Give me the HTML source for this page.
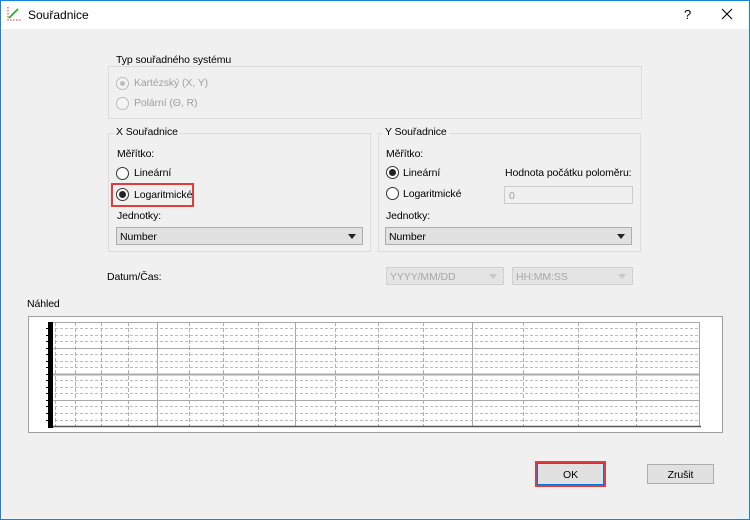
<!DOCTYPE html>
<html><head><meta charset="utf-8"><style>
*{box-sizing:border-box;margin:0;padding:0}
body{width:750px;height:520px;position:relative;background:#f0f0f0;font-family:"Liberation Sans",sans-serif;font-size:10.5px;letter-spacing:-0.1px;color:#000;overflow:hidden}
.a{position:absolute;white-space:nowrap}
.win{position:absolute;left:0;top:0;width:750px;height:520px;border:1px solid #1883d7}
.tb{position:absolute;left:0;top:0;width:750px;height:29px;background:#fff}
.grp{position:absolute;border:1px solid #dcdcdc}
.gl{position:absolute;background:#f0f0f0;padding:0 2px}
.rad{position:absolute;width:13px;height:13px;border:1px solid #333;border-radius:50%;background:#fff}
.rad.on::after{content:"";position:absolute;left:2px;top:2px;width:7px;height:7px;border-radius:50%;background:#222}
.rad.dis{border-color:#bcbcbc;background:#f4f4f4}
.rad.dis.on::after{background:#bcbcbc;left:3px;top:3px;width:5px;height:5px}
.dis{color:#a0a0a0}
.cb{position:absolute;height:18px;background:#e1e1e1;border:1px solid #adadad;padding:3px 0 0 3px}
.cb::after{content:"";position:absolute;right:6px;top:6px;border-left:4px solid transparent;border-right:4px solid transparent;border-top:5px solid #222}
.cb.d{background:#e4e4e4;border-color:#d0d0d0;color:#a8a8a8}
.cb.d::after{border-top-color:#c8c8c8}
.btn{position:absolute;background:#e1e1e1;border:1px solid #adadad;text-align:center}
</style></head><body>
<div class="tb"></div>
<div class="win"></div>
<svg class="a" style="left:6px;top:6px" width="16" height="16" viewBox="0 0 16 16">
<path d="M2 1v13h13" stroke="#d33" stroke-width="1" fill="none" stroke-dasharray="1.5 1.5"/>
<path d="M3 12L12 3" stroke="#2a2" stroke-width="1.6"/>
</svg>
<div class="a" style="left:28px;top:8px;font-size:12px;letter-spacing:0">Souřadnice</div>
<div class="a" style="left:684px;top:7px;font-size:13px">?</div>
<svg class="a" style="left:721px;top:8px" width="12" height="12"><path d="M1 1L11 11M11 1L1 11" stroke="#000" stroke-width="1.1"/></svg>

<div class="grp" style="left:108px;top:66px;width:534px;height:53px"></div>
<div class="gl" style="left:114px;top:54px">Typ souřadného systému</div>
<div class="rad dis on" style="left:116px;top:77px"></div>
<div class="a dis" style="left:134px;top:77px">Kartézský (X, Y)</div>
<div class="rad dis" style="left:116px;top:97px"></div>
<div class="a dis" style="left:134px;top:97px">Polární (Θ, R)</div>

<div class="grp" style="left:108px;top:133px;width:263px;height:119px"></div>
<div class="gl" style="left:114px;top:126px">X Souřadnice</div>
<div class="a" style="left:117px;top:148px">Měřítko:</div>
<div class="rad" style="left:116px;top:167px"></div>
<div class="a" style="left:134px;top:167px">Lineární</div>
<div class="a" style="left:111px;top:183px;width:83px;height:24px;border:2px solid #e03c3c"></div>
<div class="rad on" style="left:116px;top:188px"></div>
<div class="a" style="left:134px;top:189px">Logaritmické</div>
<div class="a" style="left:117px;top:210px">Jednotky:</div>
<div class="cb" style="left:116px;top:227px;width:247px">Number</div>

<div class="grp" style="left:378px;top:133px;width:263px;height:119px"></div>
<div class="gl" style="left:383px;top:126px">Y Souřadnice</div>
<div class="a" style="left:386px;top:148px">Měřítko:</div>
<div class="rad on" style="left:386px;top:166px"></div>
<div class="a" style="left:403px;top:167px">Lineární</div>
<div class="a" style="left:505px;top:167px">Hodnota počátku poloměru:</div>
<div class="rad" style="left:386px;top:187px"></div>
<div class="a" style="left:403px;top:188px">Logaritmické</div>
<div class="a" style="left:504px;top:186px;width:129px;height:18px;border:1px solid #ccc;background:#f0f0f0;color:#a0a0a0;padding:3px 0 0 4px">0</div>
<div class="a" style="left:386px;top:210px">Jednotky:</div>
<div class="cb" style="left:385px;top:227px;width:247px">Number</div>

<div class="a" style="left:107px;top:271px">Datum/Čas:</div>
<div class="cb d" style="left:386px;top:267px;width:118px">YYYY/MM/DD</div>
<div class="cb d" style="left:512px;top:267px;width:121px">HH:MM:SS</div>

<div class="a" style="left:27px;top:298px">Náhled</div>
<div class="a" style="left:28px;top:316px;width:695px;height:117px;background:#fff;border:1px solid #a0a0a0"></div>
<svg class="a" style="left:28px;top:316px" width="695" height="117">
<g stroke="#bdbdbd" stroke-width="1" stroke-dasharray="3 2">
<line x1="22" x2="671" y1="12.5" y2="12.5"/><line x1="22" x2="671" y1="19.5" y2="19.5"/><line x1="22" x2="671" y1="25.5" y2="25.5"/>
<line x1="22" x2="671" y1="38.5" y2="38.5"/><line x1="22" x2="671" y1="45.5" y2="45.5"/><line x1="22" x2="671" y1="51.5" y2="51.5"/>
<line x1="22" x2="671" y1="64.5" y2="64.5"/><line x1="22" x2="671" y1="71.5" y2="71.5"/><line x1="22" x2="671" y1="77.5" y2="77.5"/>
<line x1="22" x2="671" y1="90.5" y2="90.5"/><line x1="22" x2="671" y1="97.5" y2="97.5"/><line x1="22" x2="671" y1="104.5" y2="104.5"/>
</g>
<g stroke="#b0b0b0" stroke-width="1" stroke-dasharray="4 2">
<line x1="27.5" x2="27.5" y1="6" y2="111"/><line x1="47.5" x2="47.5" y1="6" y2="111"/><line x1="73.5" x2="73.5" y1="6" y2="111"/><line x1="100.5" x2="100.5" y1="6" y2="111"/>
<line x1="161.5" x2="161.5" y1="6" y2="111"/><line x1="195.5" x2="195.5" y1="6" y2="111"/><line x1="230.5" x2="230.5" y1="6" y2="111"/>
<line x1="307.5" x2="307.5" y1="6" y2="111"/><line x1="350.5" x2="350.5" y1="6" y2="111"/><line x1="395.5" x2="395.5" y1="6" y2="111"/>
<line x1="495.5" x2="495.5" y1="6" y2="111"/><line x1="550.5" x2="550.5" y1="6" y2="111"/><line x1="608.5" x2="608.5" y1="6" y2="111"/>
</g>
<g stroke="#a8a8a8" stroke-width="1">
<line x1="20" x2="671" y1="6.5" y2="6.5"/><line x1="20" x2="671" y1="32.5" y2="32.5"/><line x1="20" x2="671" y1="84.5" y2="84.5"/>
<line x1="129.5" x2="129.5" y1="6" y2="111"/><line x1="267.5" x2="267.5" y1="6" y2="111"/><line x1="444.5" x2="444.5" y1="6" y2="111"/>
<line x1="671.5" x2="671.5" y1="6" y2="111"/>
</g>
<line x1="20" x2="671" y1="58.5" y2="58.5" stroke="#aaa" stroke-width="2"/>
<line x1="20" x2="673" y1="110.5" y2="110.5" stroke="#555" stroke-width="1.5"/>
<rect x="20" y="6" width="5" height="106" fill="#000"/>
<g stroke="#000" stroke-width="1">
<path d="M18 12.5h3M18 19.5h3M18 25.5h3M18 32.5h3M18 38.5h3M18 45.5h3M18 51.5h3M18 58.5h3M18 64.5h3M18 71.5h3M18 77.5h3M18 84.5h3M18 90.5h3M18 97.5h3M18 104.5h3"/>
</g>
</svg>

<div class="a" style="left:535px;top:461px;width:71px;height:26px;border:2px solid #e03c3c"></div>
<div class="btn" style="left:537px;top:463px;width:67px;height:22px;border:1px solid #0078d7;padding-top:5px">OK</div>
<div class="btn" style="left:647px;top:464px;width:67px;height:20px;padding-top:4px">Zrušit</div>
</body></html>
